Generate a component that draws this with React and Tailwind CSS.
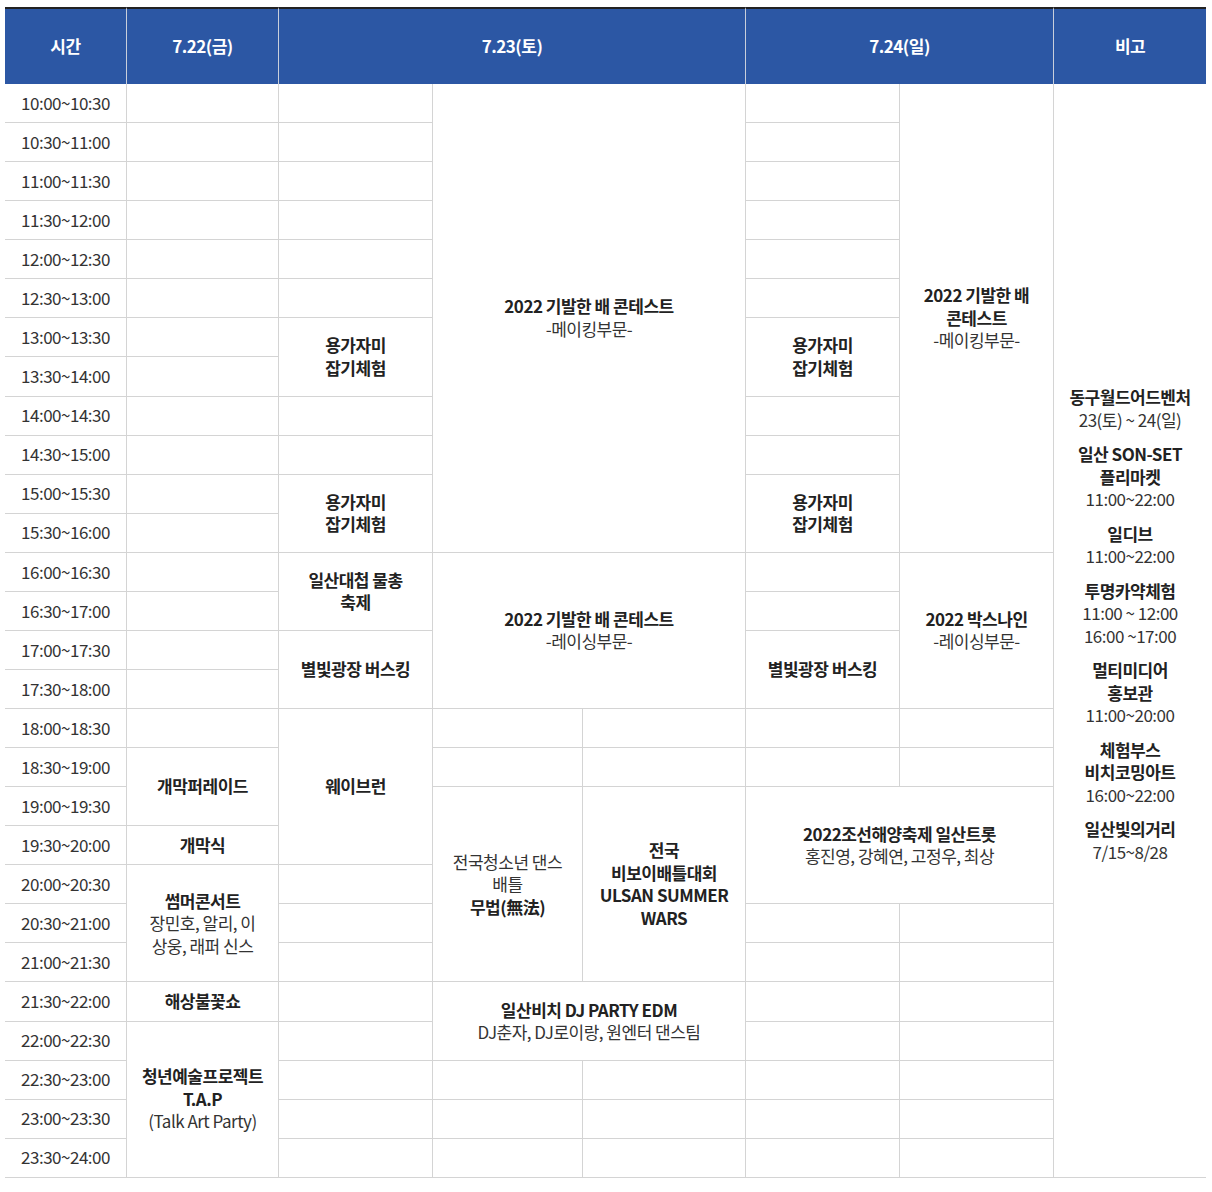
import React from 'react';

const cellBase = 'border-b border-r border-[#d4d4d4] text-center align-middle p-0';

function toTime(min) {
  const h = Math.floor(min / 60);
  const m = min % 60;
  return `${h}:${m === 0 ? '00' : m}`;
}

const times = Array.from({ length: 28 }, (_, i) => `${toTime(600 + i * 30)}~${toTime(630 + i * 30)}`);

function B({ children }) {
  return <div className="font-bold text-[#222]">{children}</div>;
}

function N({ children }) {
  return <div className="font-normal text-[#333]">{children}</div>;
}

function Td({ rs = 1, cs = 1, last = false, children }) {
  return (
    <td rowSpan={rs} colSpan={cs} className={last ? cellBase + ' border-r-0' : cellBase}>
      {children}
    </td>
  );
}

const E = () => <Td />;

const notes = [
  { b: ['동구월드어드벤처'], n: ['23(토) ~ 24(일)'] },
  { b: ['일산 SON-SET', '플리마켓'], n: ['11:00~22:00'] },
  { b: ['일디브'], n: ['11:00~22:00'] },
  { b: ['투명카약체험'], n: ['11:00 ~ 12:00', '16:00 ~17:00'] },
  { b: ['멀티미디어', '홍보관'], n: ['11:00~20:00'] },
  { b: ['체험부스', '비치코밍아트'], n: ['16:00~22:00'] },
  { b: ['일산빛의거리'], n: ['7/15~8/28'] },
];

function rowCells(i) {
  switch (i) {
    case 0:
      return (
        <>
          <E /><E />
          <Td rs={12} cs={2}>
            <B>2022 기발한 배 콘테스트</B>
            <N>-메이킹부문-</N>
          </Td>
          <E />
          <Td rs={12}>
            <B>2022 기발한 배</B>
            <B>콘테스트</B>
            <N>-메이킹부문-</N>
          </Td>
          <Td rs={28} last>
            <div className="flex flex-col gap-[12px] pb-[11px]">
              {notes.map((g, k) => (
                <div key={k}>
                  {g.b.map((t) => <B key={t}>{t}</B>)}
                  {g.n.map((t) => <N key={t}>{t}</N>)}
                </div>
              ))}
            </div>
          </Td>
        </>
      );
    case 6:
    case 10:
      return (
        <>
          <E />
          <Td rs={2}><B>용가자미</B><B>잡기체험</B></Td>
          <Td rs={2}><B>용가자미</B><B>잡기체험</B></Td>
        </>
      );
    case 7:
    case 11:
    case 15:
      return <E />;
    case 12:
      return (
        <>
          <E />
          <Td rs={2}><B>일산대첩 물총</B><B>축제</B></Td>
          <Td rs={4} cs={2}>
            <B>2022 기발한 배 콘테스트</B>
            <N>-레이싱부문-</N>
          </Td>
          <E />
          <Td rs={4}>
            <B>2022 박스나인</B>
            <N>-레이싱부문-</N>
          </Td>
        </>
      );
    case 13:
      return <><E /><E /></>;
    case 14:
      return (
        <>
          <E />
          <Td rs={2}><B>별빛광장 버스킹</B></Td>
          <Td rs={2}><B>별빛광장 버스킹</B></Td>
        </>
      );
    case 16:
      return (
        <>
          <E />
          <Td rs={4}><B>웨이브런</B></Td>
          <E /><E /><E /><E />
        </>
      );
    case 17:
      return (
        <>
          <Td rs={2}><B>개막퍼레이드</B></Td>
          <E /><E /><E /><E />
        </>
      );
    case 18:
      return (
        <>
          <Td rs={5}>
            <N>전국청소년 댄스</N>
            <N>배틀</N>
            <B>무법(無法)</B>
          </Td>
          <Td rs={5}>
            <B>전국</B>
            <B>비보이배틀대회</B>
            <B>ULSAN SUMMER</B>
            <B>WARS</B>
          </Td>
          <Td rs={3} cs={2}>
            <B>2022조선해양축제 일산트롯</B>
            <N>홍진영, 강혜연, 고정우, 최상</N>
          </Td>
        </>
      );
    case 19:
      return <Td><B>개막식</B></Td>;
    case 20:
      return (
        <>
          <Td rs={3}>
            <B>썸머콘서트</B>
            <N>장민호, 알리, 이</N>
            <N>상웅, 래퍼 신스</N>
          </Td>
          <E />
        </>
      );
    case 21:
    case 22:
      return <><E /><E /><E /></>;
    case 23:
      return (
        <>
          <Td><B>해상불꽃쇼</B></Td>
          <E />
          <Td rs={2} cs={2}>
            <B>일산비치 DJ PARTY EDM</B>
            <N>DJ춘자, DJ로이랑, 원엔터 댄스팀</N>
          </Td>
          <E /><E />
        </>
      );
    case 24:
      return (
        <>
          <Td rs={4}>
            <B>청년예술프로젝트</B>
            <B>T.A.P</B>
            <N>(Talk Art Party)</N>
          </Td>
          <E /><E /><E />
        </>
      );
    case 25:
    case 26:
    case 27:
      return <><E /><E /><E /><E /><E /></>;
    default:
      return <><E /><E /><E /></>;
  }
}

export default function App() {
  return (
    <div className="bg-white pt-[7px] pl-[5px] min-h-screen font-['Noto_Sans_CJK_KR',sans-serif] text-[17px] leading-[22.5px] tracking-[-0.5px]">
      <table className="w-[1201px] table-fixed border-separate border-spacing-0">
        <colgroup>
          <col className="w-[122px]" />
          <col className="w-[152px]" />
          <col className="w-[154px]" />
          <col className="w-[150px]" />
          <col className="w-[163px]" />
          <col className="w-[154px]" />
          <col className="w-[154px]" />
          <col className="w-[152px]" />
        </colgroup>
        <thead>
          <tr className="h-[77px] bg-[#2c57a4] text-white font-bold">
            <th className="border-t-2 border-t-[#222] border-r border-r-[#c9cfdb] font-bold">시간</th>
            <th className="border-t-2 border-t-[#222] border-r border-r-[#c9cfdb] font-bold">7.22(금)</th>
            <th colSpan={3} className="border-t-2 border-t-[#222] border-r border-r-[#c9cfdb] font-bold">7.23(토)</th>
            <th colSpan={2} className="border-t-2 border-t-[#222] border-r border-r-[#c9cfdb] font-bold">7.24(일)</th>
            <th className="border-t-2 border-t-[#222] font-bold">비고</th>
          </tr>
        </thead>
        <tbody>
          {times.map((t, i) => (
            <tr key={t} className="h-[39.07px]">
              <td className={cellBase + ' text-[#333]'}>{t}</td>
              {rowCells(i)}
            </tr>
          ))}
        </tbody>
      </table>
    </div>
  );
}
